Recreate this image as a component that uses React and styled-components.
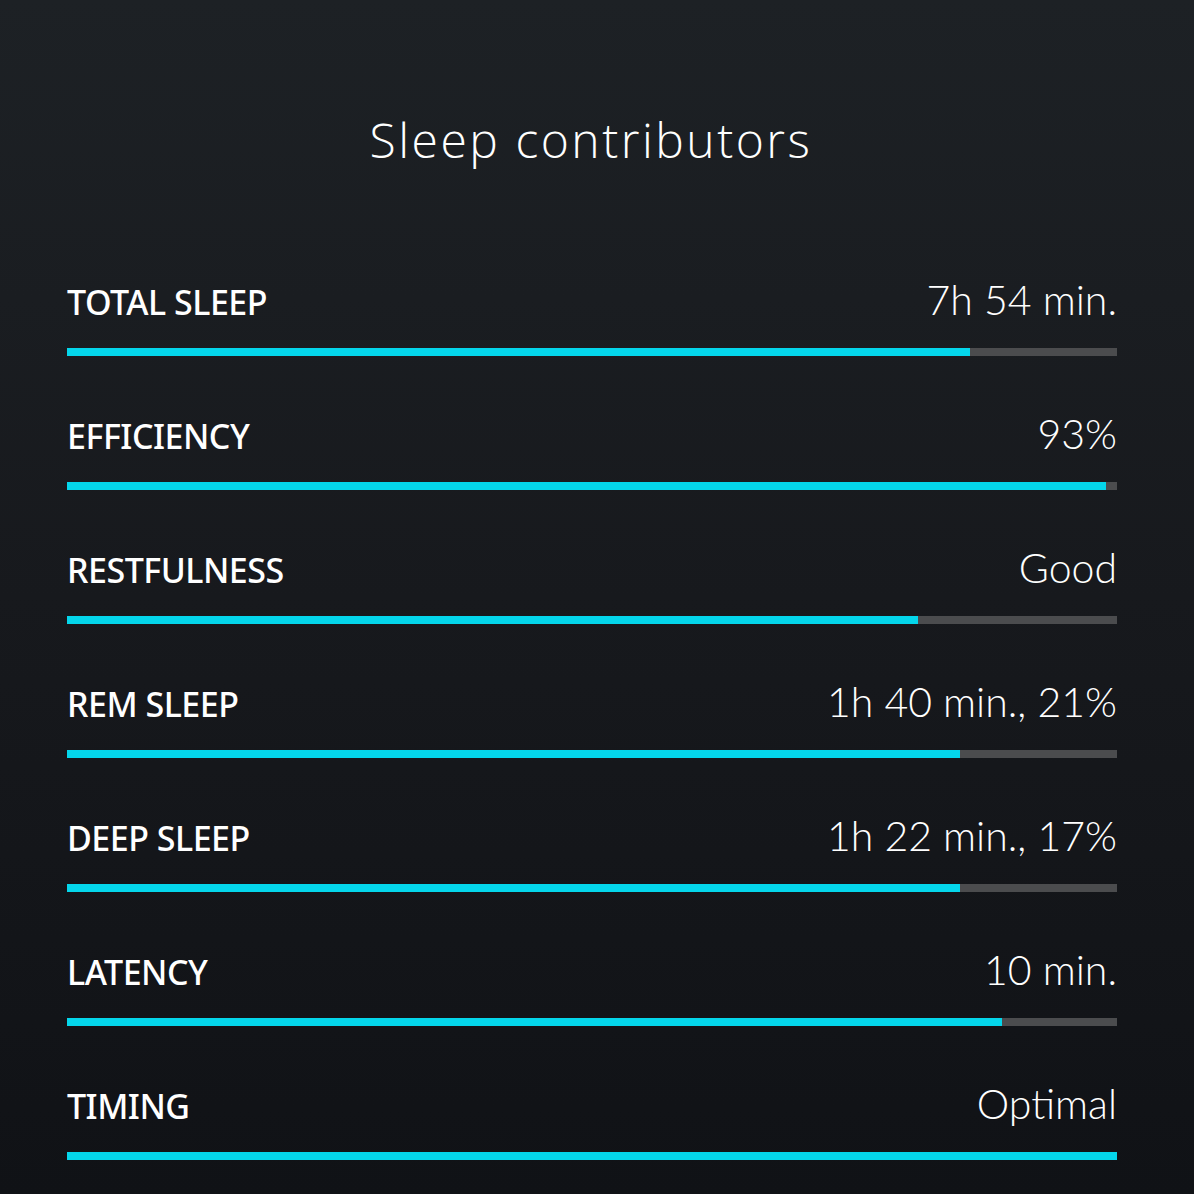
import React from "react";
import styled, { createGlobalStyle } from "styled-components";

const GlobalStyle = createGlobalStyle`
  html, body {
    margin: 0;
    padding: 0;
    background: #101216;
  }
`;

const contributors = [
  { label: "TOTAL SLEEP", value: "7h 54 min.", fill: 86 },
  { label: "EFFICIENCY", value: "93%", fill: 98.95 },
  { label: "RESTFULNESS", value: "Good", fill: 81 },
  { label: "REM SLEEP", value: "1h 40 min., 21%", fill: 85 },
  { label: "DEEP SLEEP", value: "1h 22 min., 17%", fill: 85 },
  { label: "LATENCY", value: "10 min.", fill: 89 },
  { label: "TIMING", value: "Optimal", fill: 100 },
];

const App = () => {
  return (
    <Screen>
      <GlobalStyle />
      <Title>Sleep contributors</Title>
      <List>
        {contributors.map((item) => (
          <Row key={item.label}>
            <RowHeader>
              <Label>{item.label}</Label>
              <Value>{item.value}</Value>
            </RowHeader>
            <Track>
              <Fill style={{ width: `${item.fill}%` }} />
            </Track>
          </Row>
        ))}
      </List>
    </Screen>
  );
};

const Screen = styled.div`
  width: 1194px;
  height: 1194px;
  overflow: hidden;
  background: linear-gradient(180deg, #1d2125 0%, #17191d 50%, #101216 100%);
  color: #ffffff;
  display: flex;
  flex-direction: column;
`;

const Title = styled.h1`
  margin: 0;
  padding: 110px 12px 0 0;
  text-align: center;
  font-family: "Open Sans", "Lato", sans-serif;
  font-weight: 300;
  font-size: 48px;
  line-height: 60px;
  letter-spacing: 2.5px;
`;

const List = styled.div`
  display: flex;
  flex-direction: column;
  gap: 57px;
  padding: 109px 77px 0 67px;
`;

const Row = styled.div`
  display: flex;
  flex-direction: column;
`;

const RowHeader = styled.div`
  display: flex;
  justify-content: space-between;
  align-items: baseline;
  line-height: 42px;
`;

const Label = styled.span`
  font-family: "Noto Sans", "Open Sans", sans-serif;
  font-weight: 500;
  font-size: 34px;
  letter-spacing: -0.5px;
`;

const Value = styled.span`
  font-family: "Lato", "Open Sans", sans-serif;
  font-weight: 300;
  font-size: 41px;
`;

const Track = styled.div`
  height: 8px;
  margin-top: 25px;
  background: #4b4c4e;
`;

const Fill = styled.div`
  height: 100%;
  background: #04d6eb;
`;

export default App;
